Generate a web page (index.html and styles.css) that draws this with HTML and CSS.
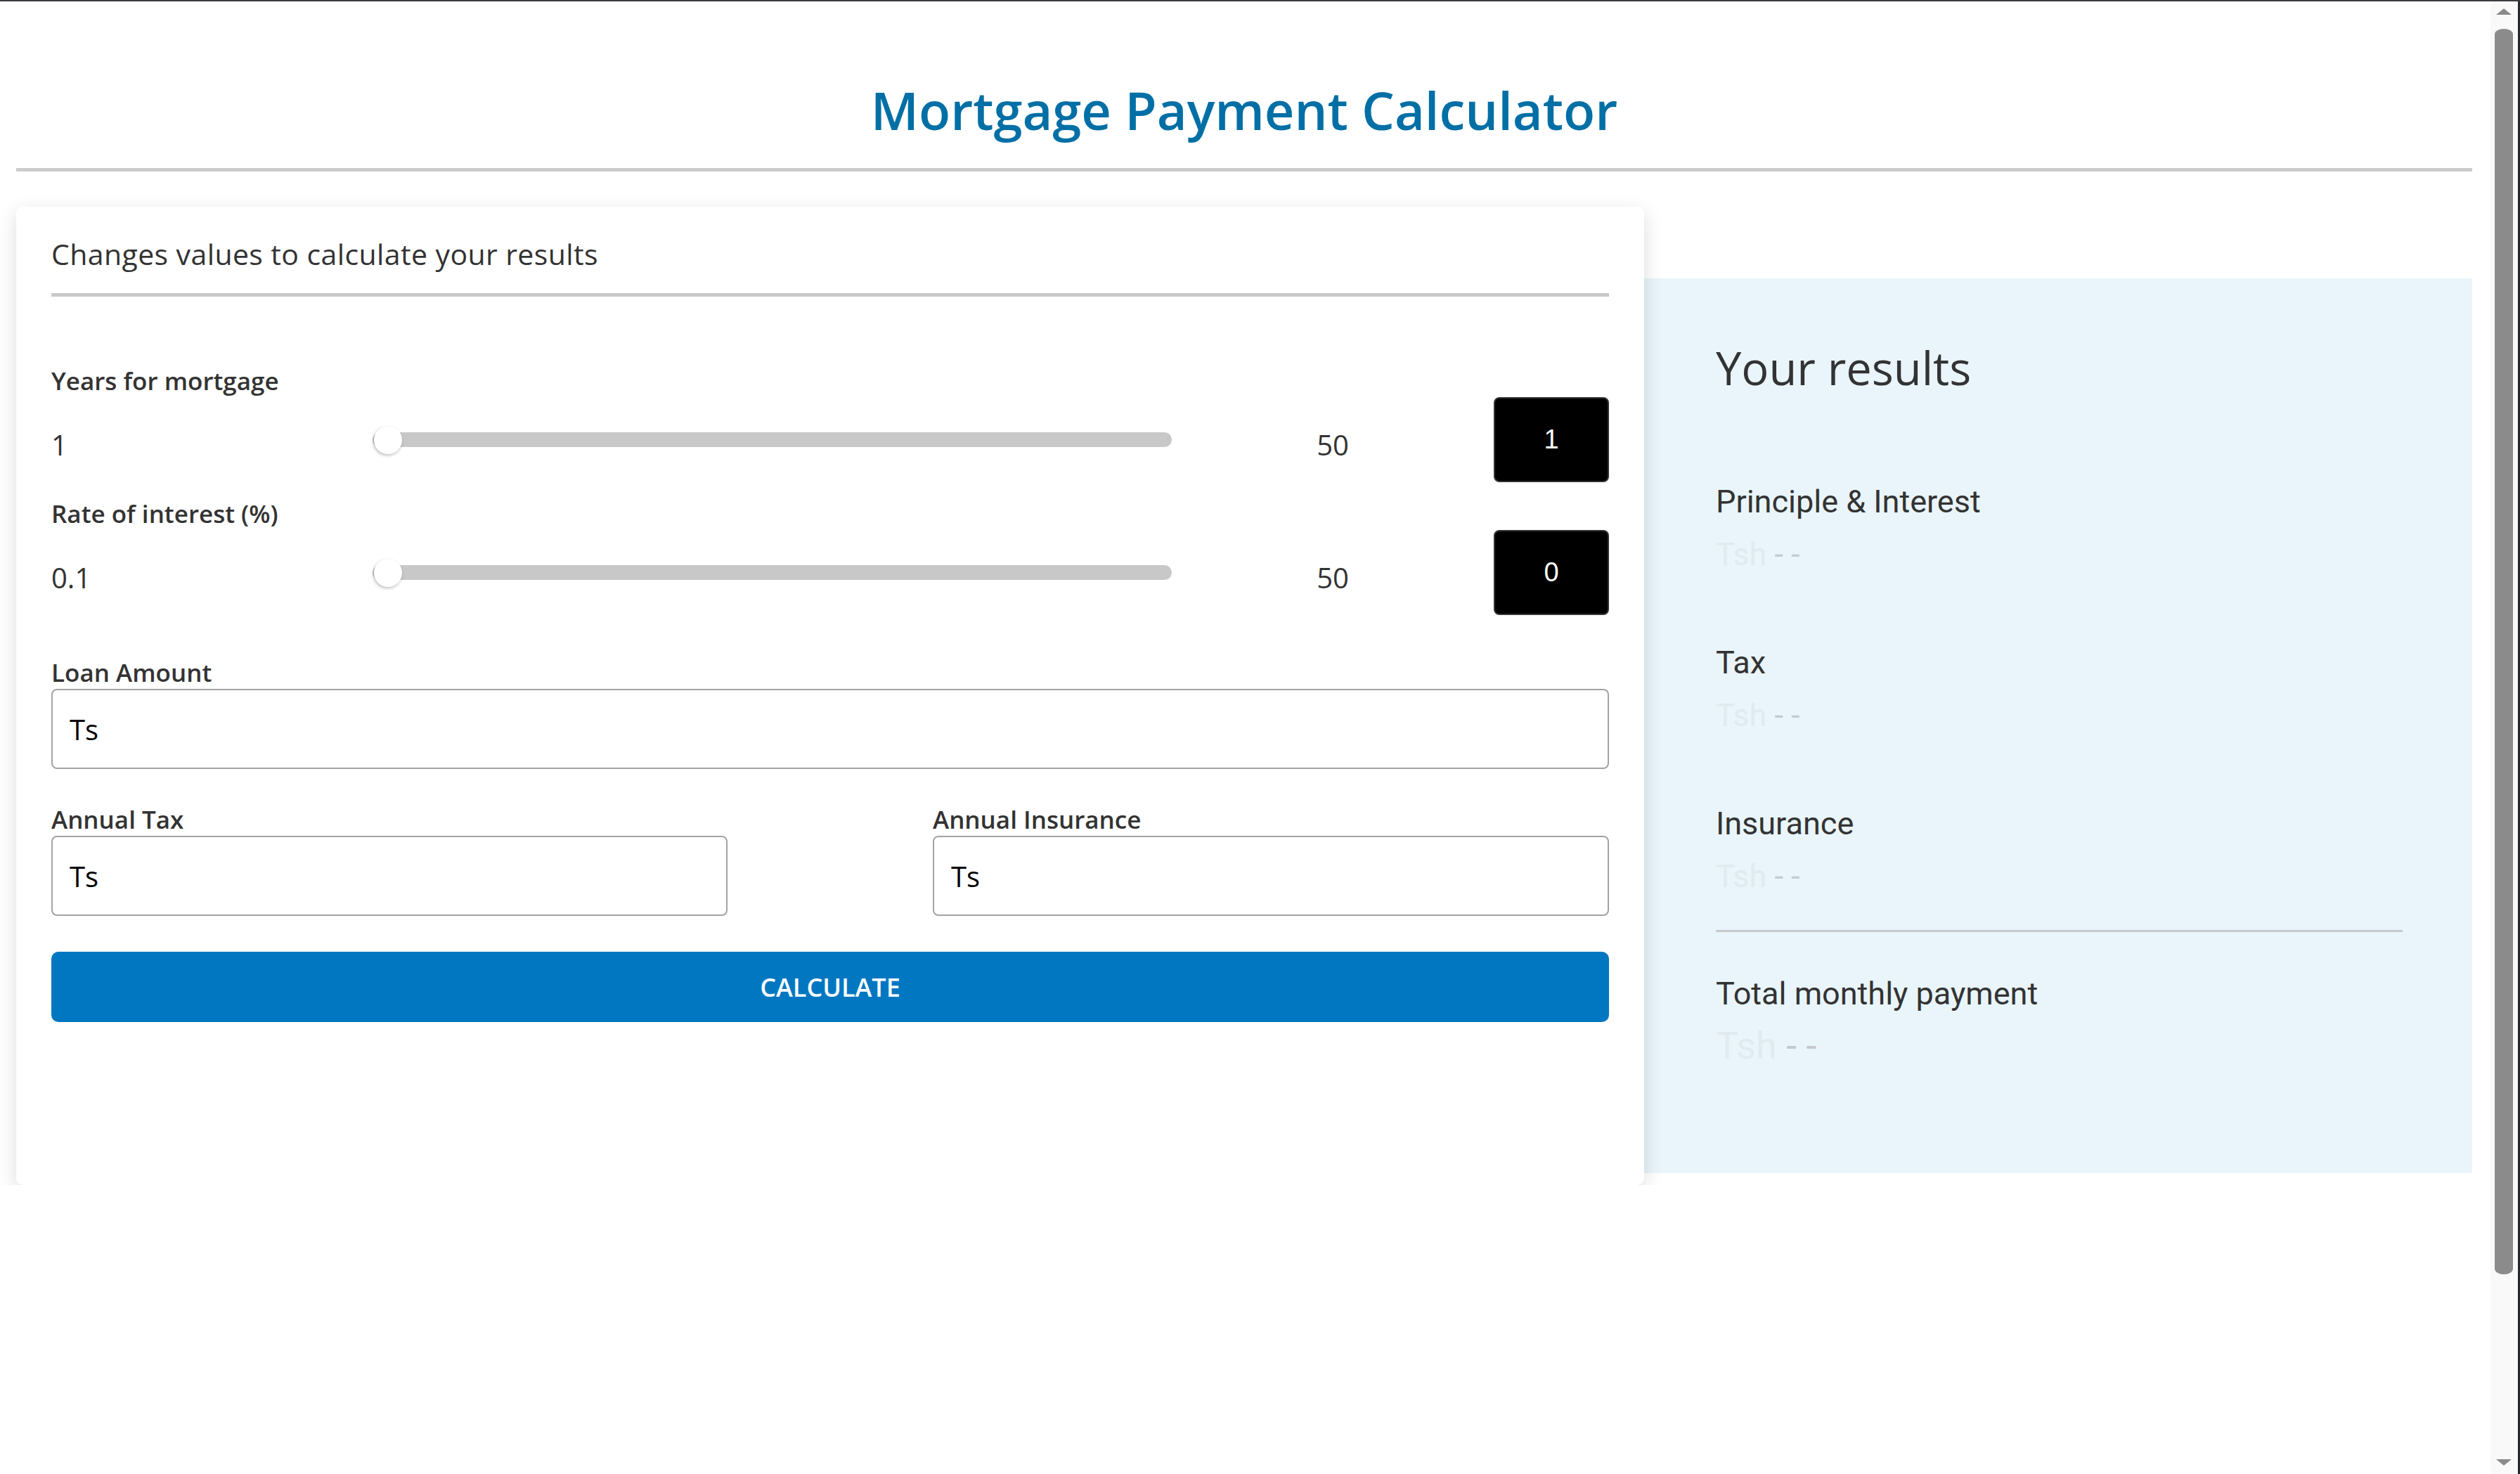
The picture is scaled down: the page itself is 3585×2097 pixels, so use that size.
FILE: index.html
```html
<!DOCTYPE html>
<html lang="en">
<head>
<meta charset="utf-8">
<title>Mortgage Payment Calculator</title>
<link rel="stylesheet" href="styles.css">
</head>
<body>
<div class="window-top" aria-hidden="true"></div>
<div class="scrollbar" aria-hidden="true">
  <span class="sb-arrow sb-up"></span>
  <span class="sb-thumb"></span>
  <span class="sb-arrow sb-down"></span>
</div>

<div class="page">
  <header class="page-head">
    <h1 class="title">Mortgage Payment Calculator</h1>
    <hr class="title-rule">
  </header>

  <main class="calc">
    <section class="card">
      <h2 class="card-head">Changes values to calculate your results</h2>
      <hr class="card-rule">

      <div class="sliders">
        <div class="slider-group">
          <label class="field-label">Years for mortgage</label>
          <div class="slider-row">
            <span class="range-min">1</span>
            <div class="track"><span class="thumb"></span></div>
            <span class="range-max">50</span>
            <div class="value-box">1</div>
          </div>
        </div>
        <div class="slider-group">
          <label class="field-label">Rate of interest (%)</label>
          <div class="slider-row">
            <span class="range-min">0.1</span>
            <div class="track"><span class="thumb"></span></div>
            <span class="range-max">50</span>
            <div class="value-box">0</div>
          </div>
        </div>
      </div>

      <div class="field loan">
        <label class="field-label">Loan Amount</label>
        <input class="text-input" type="text" value="Ts">
      </div>

      <div class="pair">
        <div class="field">
          <label class="field-label">Annual Tax</label>
          <input class="text-input" type="text" value="Ts">
        </div>
        <div class="field">
          <label class="field-label">Annual Insurance</label>
          <input class="text-input" type="text" value="Ts">
        </div>
      </div>

      <button class="calc-btn" type="button">Calculate</button>
    </section>

    <aside class="results">
      <h2 class="results-title">Your results</h2>
      <div class="result-list">
        <div class="result">
          <div class="result-label">Principle &amp; Interest</div>
          <div class="result-value"><span class="cur">Tsh</span> <span class="dash">- -</span></div>
        </div>
        <div class="result">
          <div class="result-label">Tax</div>
          <div class="result-value"><span class="cur">Tsh</span> <span class="dash">- -</span></div>
        </div>
        <div class="result">
          <div class="result-label">Insurance</div>
          <div class="result-value"><span class="cur">Tsh</span> <span class="dash">- -</span></div>
        </div>
      </div>
      <hr class="results-rule">
      <div class="result total">
        <div class="result-label">Total monthly payment</div>
        <div class="result-value"><span class="cur">Tsh</span> <span class="dash">- -</span></div>
      </div>
    </aside>
  </main>
</div>
</body>
</html>
```

FILE: styles.css
```css
html, body {
  margin: 0;
  padding: 0;
  background: #ffffff;
}

body {
  font-family: "Open Sans", "Liberation Sans", sans-serif;
  color: #333333;
  overflow: hidden;
}

/* window chrome seen in the screenshot */
.window-top {
  position: fixed;
  top: 0;
  left: 0;
  right: 0;
  height: 2px;
  background: #3b3d40;
  z-index: 10;
}

.scrollbar {
  position: fixed;
  top: 0;
  right: 0;
  bottom: 0;
  width: 42px;
  box-sizing: border-box;
  background: #f9f9f9;
  border-right: 3px solid #24272b;
  z-index: 9;
}

.sb-thumb {
  position: absolute;
  left: 6px;
  width: 26px;
  top: 41px;
  height: 1772px;
  border-radius: 13px / 8px;
  background: #8b8b8b;
}

.sb-arrow {
  position: absolute;
  left: 8px;
  width: 0;
  height: 0;
  border-left: 11px solid transparent;
  border-right: 11px solid transparent;
}

.sb-up {
  top: 12px;
  border-bottom: 9px solid #8b8b8b;
}

.sb-down {
  bottom: 12px;
  border-top: 9px solid #8b8b8b;
}

/* page */
.page {
  padding: 0 68px 0 23px;
}

.title {
  margin: 0;
  padding-top: 104px;
  text-align: center;
  font-size: 74px;
  font-weight: 600;
  line-height: 106px;
  color: #006fa5;
}

.title-rule {
  margin: 29px 0 0;
  height: 5px;
  border: 0;
  background: #cccccc;
}

.calc {
  display: flex;
  align-items: flex-start;
  margin-top: 50px;
}

/* form card */
.card {
  position: relative;
  z-index: 1;
  width: 2316px;
  flex: none;
  box-sizing: border-box;
  padding: 40px 50px 232px;
  background: #ffffff;
  border-radius: 10px;
  box-shadow: 0 8px 28px rgba(0, 0, 0, 0.14);
}

.card-head {
  margin: 0;
  font-size: 41px;
  font-weight: 400;
  letter-spacing: 0.4px;
  line-height: 54px;
  color: #333333;
}

.card-rule {
  margin: 29px 0 0;
  height: 5px;
  border: 0;
  background: #c8c8c8;
}

.sliders {
  margin-top: 96px;
}

.slider-group + .slider-group {
  margin-top: 21px;
}

.field-label {
  display: block;
  font-size: 35px;
  font-weight: 600;
  line-height: 47px;
  color: #333333;
}

.slider-row {
  display: grid;
  grid-template-columns: 457px 1137px 1fr 164px;
  align-items: center;
  height: 121px;
}

.range-min,
.range-max {
  font-size: 40px;
  line-height: 54px;
  padding-top: 14px;
  color: #333333;
}

.range-max {
  text-align: center;
}

.track {
  position: relative;
  height: 21px;
  background: #c8c8c8;
  border-radius: 11px;
}

.thumb {
  position: absolute;
  left: 2px;
  top: 50%;
  width: 40px;
  height: 40px;
  transform: translateY(-50%);
  border-radius: 50%;
  background: #ffffff;
  box-shadow: -1px 2px 4px rgba(0, 0, 0, 0.25);
}

.value-box {
  display: flex;
  align-items: center;
  justify-content: center;
  height: 121px;
  box-sizing: border-box;
  border: 2px solid #333333;
  border-radius: 8px;
  background: #000000;
  color: #ffffff;
  font-family: "Liberation Sans", Arial, sans-serif;
  font-size: 38px;
}

.loan {
  margin-top: 58px;
}

.text-input {
  display: block;
  width: 100%;
  height: 114px;
  box-sizing: border-box;
  margin: 0;
  padding: 0 24px;
  border: 2px solid #a3a3a3;
  border-radius: 8px;
  background: #ffffff;
  color: #000000;
  font-family: "Open Sans", sans-serif;
  font-size: 40px;
  outline: none;
}

.pair {
  display: grid;
  grid-template-columns: 962px 962px;
  justify-content: space-between;
  margin-top: 48px;
}

.calc-btn {
  display: block;
  width: 100%;
  height: 100px;
  margin-top: 51px;
  border: 0;
  border-radius: 10px;
  background: #0177c1;
  color: #ffffff;
  font-family: "Open Sans", sans-serif;
  font-size: 36px;
  font-weight: 600;
  text-transform: uppercase;
}

/* results panel */
.results {
  flex: none;
  width: 1178px;
  height: 1273px;
  box-sizing: border-box;
  margin-top: 102px;
  padding: 82px 99px 0 102px;
  background: #e9f5fa;
}

.results-title {
  margin: 0;
  font-size: 65px;
  font-weight: 400;
  line-height: 90px;
  color: #333333;
}

.result-list {
  margin-top: 120px;
}

.result {
  font-family: Roboto, "Liberation Sans", sans-serif;
}

.result + .result {
  margin-top: 102px;
}

.result-label {
  font-size: 45px;
  line-height: 52px;
  color: #333333;
}

.result-value {
  margin-top: 23px;
  font-size: 45px;
  line-height: 52px;
}

.cur {
  color: #e0eaef;
}

.dash {
  color: #c4cace;
}

.results-rule {
  margin: 50px 0 0;
  height: 3px;
  border: 0;
  background: #c7cbce;
}

.total {
  margin-top: 62px;
}

.total .result-value {
  margin-top: 17px;
  font-size: 54px;
  line-height: 62px;
}
```
